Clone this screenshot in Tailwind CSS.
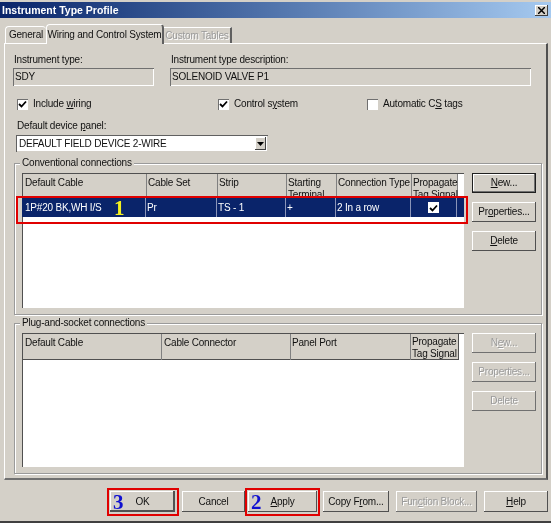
<!DOCTYPE html>
<html lang="en">
<head>
    <meta charset="UTF-8">
    <title>Instrument Type Profile</title>
    <script src="https://cdn.jsdelivr.net/npm/@tailwindcss/browser@4"></script>
</head>
<body class="bg-white">
    <div class="relative w-[551px] h-[523px] pt-[2px] bg-[#d4d0c8] border-b-2 border-[#404040] overflow-hidden whitespace-nowrap text-[10px] tracking-[-0.2px] leading-none text-[#111] font-['Liberation_Sans',sans-serif] blur-[0.3px]">
        <!-- Title bar -->
        <div class="h-[16px] pl-[2px] pr-[3px] flex items-center justify-between bg-gradient-to-r from-[#0a246a] to-[#a6caf0]">
            <span class="text-[10.5px] tracking-normal font-bold text-white">Instrument Type Profile</span>
            <span class="w-[13px] h-[11px] flex items-center justify-center bg-[#d4d0c8] shadow-[inset_-1px_-1px_0_#404040,inset_1px_1px_0_#fff]">
                <svg width="7" height="7" viewBox="0 0 7 7"><path d="M0 0L7 7M7 0L0 7" stroke="#000" stroke-width="1.5"/></svg>
            </span>
        </div>

        <!-- Tabs -->
        <div class="h-[25px] pl-[5px] flex items-end">
            <div class="w-[41px] h-[17px] flex items-center justify-center border-t border-l border-white rounded-t-sm">General</div>
            <div class="relative z-10 -mb-px w-[118px] h-[20px] flex items-center justify-center border-t border-l border-white border-r-2 border-r-[#606060] bg-[#d4d0c8] rounded-t-sm">Wiring and Control System</div>
            <div class="w-[68px] h-[16px] flex items-center justify-center border-t border-white border-r-2 border-r-[#606060] text-[#9a9a9a] [text-shadow:1px_1px_0_#fff]">Custom Tables</div>
        </div>

        <!-- Tab page -->
        <div class="ml-[4px] w-[544px] h-[437px] pt-[9px] pl-[8px] border-t border-l border-white border-r-2 border-r-[#505050] border-b-2 border-b-[#707070]">
            <div class="flex">
                <div class="w-[141px]">
                    <div class="pl-px h-[14px] flex items-center">Instrument type:</div>
                    <div class="mt-px h-[18px] pl-[2px] flex items-center shadow-[inset_1px_1px_0_#707070,inset_-1px_-1px_0_#fff]">SDY</div>
                </div>
                <div class="ml-[16px] w-[361px]">
                    <div class="pl-px h-[14px] flex items-center">Instrument type description:</div>
                    <div class="mt-px h-[18px] pl-[2px] flex items-center shadow-[inset_1px_1px_0_#707070,inset_-1px_-1px_0_#fff]">SOLENOID VALVE P1</div>
                </div>
            </div>

            <div class="mt-[12px] h-[12px] flex items-center">
                <div class="ml-[4px] w-[201px] flex items-center gap-[5px]">
                    <span class="w-[11px] h-[11px] bg-white flex items-center justify-center shadow-[inset_1px_1px_0_#707070]">
                        <svg width="9" height="8" viewBox="0 0 9 8"><path d="M1 4L3.5 6.5L8 1.5" fill="none" stroke="#000" stroke-width="1.8"/></svg>
                    </span>
                    <span>Include <u>w</u>iring</span>
                </div>
                <div class="w-[149px] flex items-center gap-[5px]">
                    <span class="w-[11px] h-[11px] bg-white flex items-center justify-center shadow-[inset_1px_1px_0_#707070]">
                        <svg width="9" height="8" viewBox="0 0 9 8"><path d="M1 4L3.5 6.5L8 1.5" fill="none" stroke="#000" stroke-width="1.8"/></svg>
                    </span>
                    <span>Control s<u>y</u>stem</span>
                </div>
                <div class="flex items-center gap-[5px]">
                    <span class="w-[11px] h-[11px] bg-white shadow-[inset_1px_1px_0_#707070]"></span>
                    <span>Automatic C<u>S</u> tags</span>
                </div>
            </div>

            <div class="mt-[10px] ml-[4px] h-[12px] flex items-center"><span>Default device <u>p</u>anel:</span></div>
            <div class="mt-[3px] ml-[3px] w-[252px] h-[17px] pl-[3px] pr-[2px] flex items-center justify-between bg-white shadow-[inset_1px_1px_0_#606060,inset_-1px_-1px_0_#d4d0c8]">
                <span>DEFAULT FIELD DEVICE 2-WIRE</span>
                <span class="w-[11px] h-[13px] flex items-center justify-center bg-[#d4d0c8] shadow-[inset_-1px_-1px_0_#404040,inset_1px_1px_0_#fff]">
                    <svg width="7" height="4" viewBox="0 0 7 4"><path d="M0 0H7L3.5 4Z" fill="#000"/></svg>
                </span>
            </div>

            <!-- Conventional connections -->
            <div class="relative mt-[11px] ml-px w-[528px] h-[152px] pt-[9px] pl-[7px] flex border border-[#9a9a9a] shadow-[inset_1px_1px_0_#fff,1px_1px_0_#fff]">
                <span class="absolute -top-[6px] left-[5px] px-[2px] bg-[#d4d0c8]">Conventional connections</span>
                <div class="w-[442px] h-[135px] bg-white shadow-[inset_1px_1px_0_#505050]">
                    <div class="h-[24px] grid grid-cols-[124px_71px_69px_50px_75px_46px] bg-[#d4d0c8] border-t border-l border-[#505050] overflow-hidden w-[436px]">
                        <div class="pl-[2px] pt-[4px] border-r border-[#808080]">Default Cable</div>
                        <div class="pl-px pt-[4px] border-r border-[#808080]">Cable Set</div>
                        <div class="pl-px pt-[4px] border-r border-[#808080]">Strip</div>
                        <div class="pl-px pt-[3px] border-r border-[#808080] leading-[12px]">Starting<br>Terminal</div>
                        <div class="pl-px pt-[4px] border-r border-[#808080]">Connection Type</div>
                        <div class="pl-px pt-[3px] border-r border-[#808080] leading-[12px]">Propagate<br>Tag Signal</div>
                    </div>
                    <div class="mt-px h-[19px] grid grid-cols-[124px_71px_69px_50px_75px_46px_7px] items-center bg-[#0a246a] text-white">
                        <div class="pl-[3px] h-full flex items-center border-r border-[#8a94b8]">1P#20 BK,WH I/S</div>
                        <div class="pl-px h-full flex items-center border-r border-[#8a94b8]">Pr</div>
                        <div class="pl-px h-full flex items-center border-r border-[#8a94b8]">TS - 1</div>
                        <div class="pl-px h-full flex items-center border-r border-[#8a94b8]">+</div>
                        <div class="pl-px h-full flex items-center border-r border-[#8a94b8]">2 In a row</div>
                        <div class="h-full flex items-center justify-center border-r border-[#8a94b8]">
                            <span class="w-[11px] h-[11px] bg-white flex items-center justify-center">
                                <svg width="9" height="8" viewBox="0 0 9 8"><path d="M1 4L3.5 6.5L8 1.5" fill="none" stroke="#000" stroke-width="1.8"/></svg>
                            </span>
                        </div>
                        <div></div>
                    </div>
                </div>
                <div class="ml-[8px] w-[64px] flex flex-col gap-[9px]">
                    <div class="h-[20px] flex items-center justify-center border border-[#202020] shadow-[inset_-1px_-1px_0_#707070,inset_1px_1px_0_#fff]"><span><u>N</u>ew...</span></div>
                    <div class="h-[20px] flex items-center justify-center shadow-[inset_-1px_-1px_0_#505050,inset_1px_1px_0_#fff]"><span>Pr<u>o</u>perties...</span></div>
                    <div class="h-[20px] flex items-center justify-center shadow-[inset_-1px_-1px_0_#505050,inset_1px_1px_0_#fff]"><span><u>D</u>elete</span></div>
                </div>
            </div>

            <!-- Plug-and-socket connections -->
            <div class="relative mt-[8px] ml-px w-[528px] h-[151px] pt-[9px] pl-[7px] flex border border-[#9a9a9a] shadow-[inset_1px_1px_0_#fff,1px_1px_0_#fff]">
                <span class="absolute -top-[6px] left-[5px] px-[2px] bg-[#d4d0c8]">Plug-and-socket connections</span>
                <div class="w-[442px] h-[134px] bg-white shadow-[inset_1px_1px_0_#505050]">
                    <div class="h-[27px] w-[436px] grid grid-cols-[139px_129px_120px_48px] bg-[#d4d0c8] border-t border-l border-b border-[#505050]">
                        <div class="pl-[2px] pt-[4px] border-r border-[#808080]">Default Cable</div>
                        <div class="pl-[2px] pt-[4px] border-r border-[#808080]">Cable Connector</div>
                        <div class="pl-px pt-[4px] border-r border-[#808080]">Panel Port</div>
                        <div class="pl-px pt-[2px] border-r border-[#505050] leading-[12px]">Propagate<br>Tag Signal</div>
                    </div>
                </div>
                <div class="ml-[8px] w-[64px] flex flex-col gap-[9px] text-[#9a9a9a] [text-shadow:1px_1px_0_#fff]">
                    <div class="h-[20px] flex items-center justify-center shadow-[inset_-1px_-1px_0_#707070,inset_1px_1px_0_#fff]"><span>N<u>e</u>w...</span></div>
                    <div class="h-[20px] flex items-center justify-center shadow-[inset_-1px_-1px_0_#707070,inset_1px_1px_0_#fff]"><span>Properties...</span></div>
                    <div class="h-[20px] flex items-center justify-center shadow-[inset_-1px_-1px_0_#707070,inset_1px_1px_0_#fff]"><span>Delete</span></div>
                </div>
            </div>
        </div>

        <!-- Dialog buttons -->
        <div class="mt-[11px] pl-[110px] h-[21px] flex">
            <div class="w-[65px] flex items-center justify-center shadow-[inset_-2px_-2px_0_#505050,inset_1px_1px_0_#fff]">OK</div>
            <div class="ml-[7px] w-[63px] flex items-center justify-center shadow-[inset_-1px_-1px_0_#505050,inset_1px_1px_0_#fff]">Cancel</div>
            <div class="ml-[3px] w-[69px] flex items-center justify-center shadow-[inset_-1px_-1px_0_#505050,inset_1px_1px_0_#fff]"><span><u>A</u>pply</span></div>
            <div class="ml-[6px] w-[66px] flex items-center justify-center shadow-[inset_-1px_-1px_0_#505050,inset_1px_1px_0_#fff]"><span>Copy F<u>r</u>om...</span></div>
            <div class="ml-[7px] w-[81px] flex items-center justify-center text-[#9a9a9a] [text-shadow:1px_1px_0_#fff] shadow-[inset_-1px_-1px_0_#707070,inset_1px_1px_0_#fff]"><span>Fun<u>c</u>tion Block...</span></div>
            <div class="ml-[7px] w-[64px] flex items-center justify-center shadow-[inset_-1px_-1px_0_#505050,inset_1px_1px_0_#fff]"><span><u>H</u>elp</span></div>
        </div>

        <!-- Red annotations over the dialog -->
        <div class="absolute left-[16px] top-[196px] w-[452px] h-[28px] border-2 border-[#e00000]"></div>
        <div class="absolute left-[107px] top-[488px] w-[72px] h-[28px] border-2 border-[#e00000]"></div>
        <div class="absolute left-[245px] top-[488px] w-[75px] h-[28px] border-2 border-[#e00000]"></div>
        <span class="absolute left-[114px] top-[198px] text-[21px] tracking-normal font-bold text-[#f4f020] font-['Liberation_Serif',serif]">1</span>
        <span class="absolute left-[251px] top-[492px] text-[21px] tracking-normal font-bold text-[#1010d0] font-['Liberation_Serif',serif]">2</span>
        <span class="absolute left-[113px] top-[492px] text-[21px] tracking-normal font-bold text-[#1010d0] font-['Liberation_Serif',serif]">3</span>
    </div>
</body>
</html>
